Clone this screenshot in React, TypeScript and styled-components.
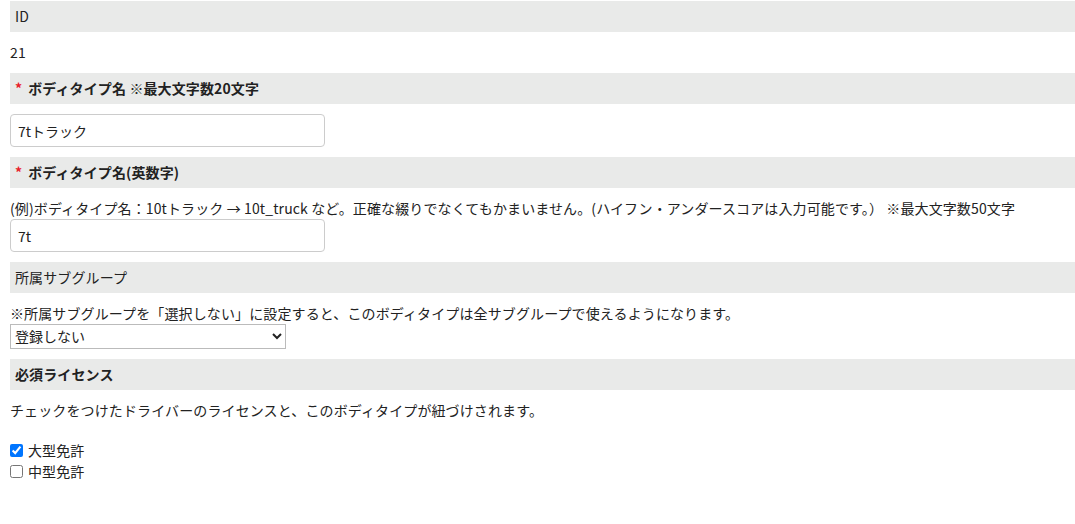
import styled, { createGlobalStyle } from "styled-components";

const GlobalStyle = createGlobalStyle`
  body {
    margin: 0;
    background: #ffffff;
    color: #222222;
    font-family: "Noto Sans CJK JP", "Noto Sans", sans-serif;
    font-size: 14px;
    letter-spacing: 0.12px;
  }
`;

const Page = styled.main`
  padding: 1px 0 0 10px;
`;

const Header = styled.div<{ $bold?: boolean }>`
  height: 31px;
  display: flex;
  align-items: center;
  padding-left: 5px;
  background: #e9eae9;
  font-weight: ${(p) => (p.$bold ? 700 : 400)};
  line-height: 21px;
`;

const Required = styled.span`
  color: #e8202a;
  margin-right: 6px;
`;

const Body = styled.div`
  padding: 10px 0;
  line-height: 21px;
`;

const TextInput = styled.input`
  display: block;
  box-sizing: border-box;
  width: 315px;
  height: 33px;
  padding: 0 7px;
  border: 1px solid #cccccc;
  border-radius: 4px;
  font: inherit;
  color: #222222;
  outline: none;
`;

const SelectWrap = styled.div`
  position: relative;
  width: 276px;
  height: 25px;
`;

const Select = styled.select`
  box-sizing: border-box;
  width: 100%;
  height: 100%;
  padding: 0 4px;
  border: 1px solid #bbbbbb;
  border-radius: 0;
  background: #ffffff;
  font: inherit;
  color: #222222;
  appearance: none;
`;

const Chevron = styled.svg`
  position: absolute;
  right: 4px;
  top: 8px;
  pointer-events: none;
`;

const CheckList = styled.div`
  margin-top: 19px;
  display: flex;
  flex-direction: column;
`;

const CheckRow = styled.label`
  display: flex;
  align-items: center;
  height: 21px;
  gap: 5px;
`;

const Check = styled.input`
  width: 13px;
  height: 13px;
  margin: 0;
`;

export default function App() {
  return (
    <>
      <GlobalStyle />
      <Page>
        <Header>ID</Header>
        <Body>21</Body>

        <Header $bold>
          <Required>*</Required>ボディタイプ名 ※最大文字数20文字
        </Header>
        <Body>
          <TextInput defaultValue="7tトラック" />
        </Body>

        <Header $bold>
          <Required>*</Required>ボディタイプ名(英数字)
        </Header>
        <Body>
          <div>
            (例)ボディタイプ名：10tトラック → 10t_truck など。正確な綴りでなくてもかまいません。(ハイフン・アンダースコアは入力可能です。） ※最大文字数50文字
          </div>
          <TextInput defaultValue="7t" />
        </Body>

        <Header>所属サブグループ</Header>
        <Body>
          <div>※所属サブグループを「選択しない」に設定すると、このボディタイプは全サブグループで使えるようになります。</div>
          <SelectWrap>
            <Select defaultValue="none">
              <option value="none">登録しない</option>
            </Select>
            <Chevron width="10" height="8" viewBox="0 0 10 8">
              <path d="M1 2 L5 6 L9 2" fill="none" stroke="#222" strokeWidth="2" />
            </Chevron>
          </SelectWrap>
        </Body>

        <Header $bold>必須ライセンス</Header>
        <Body>
          <div>チェックをつけたドライバーのライセンスと、このボディタイプが紐づけされます。</div>
          <CheckList>
            <CheckRow>
              <Check type="checkbox" defaultChecked />
              大型免許
            </CheckRow>
            <CheckRow>
              <Check type="checkbox" />
              中型免許
            </CheckRow>
          </CheckList>
        </Body>
      </Page>
    </>
  );
}
